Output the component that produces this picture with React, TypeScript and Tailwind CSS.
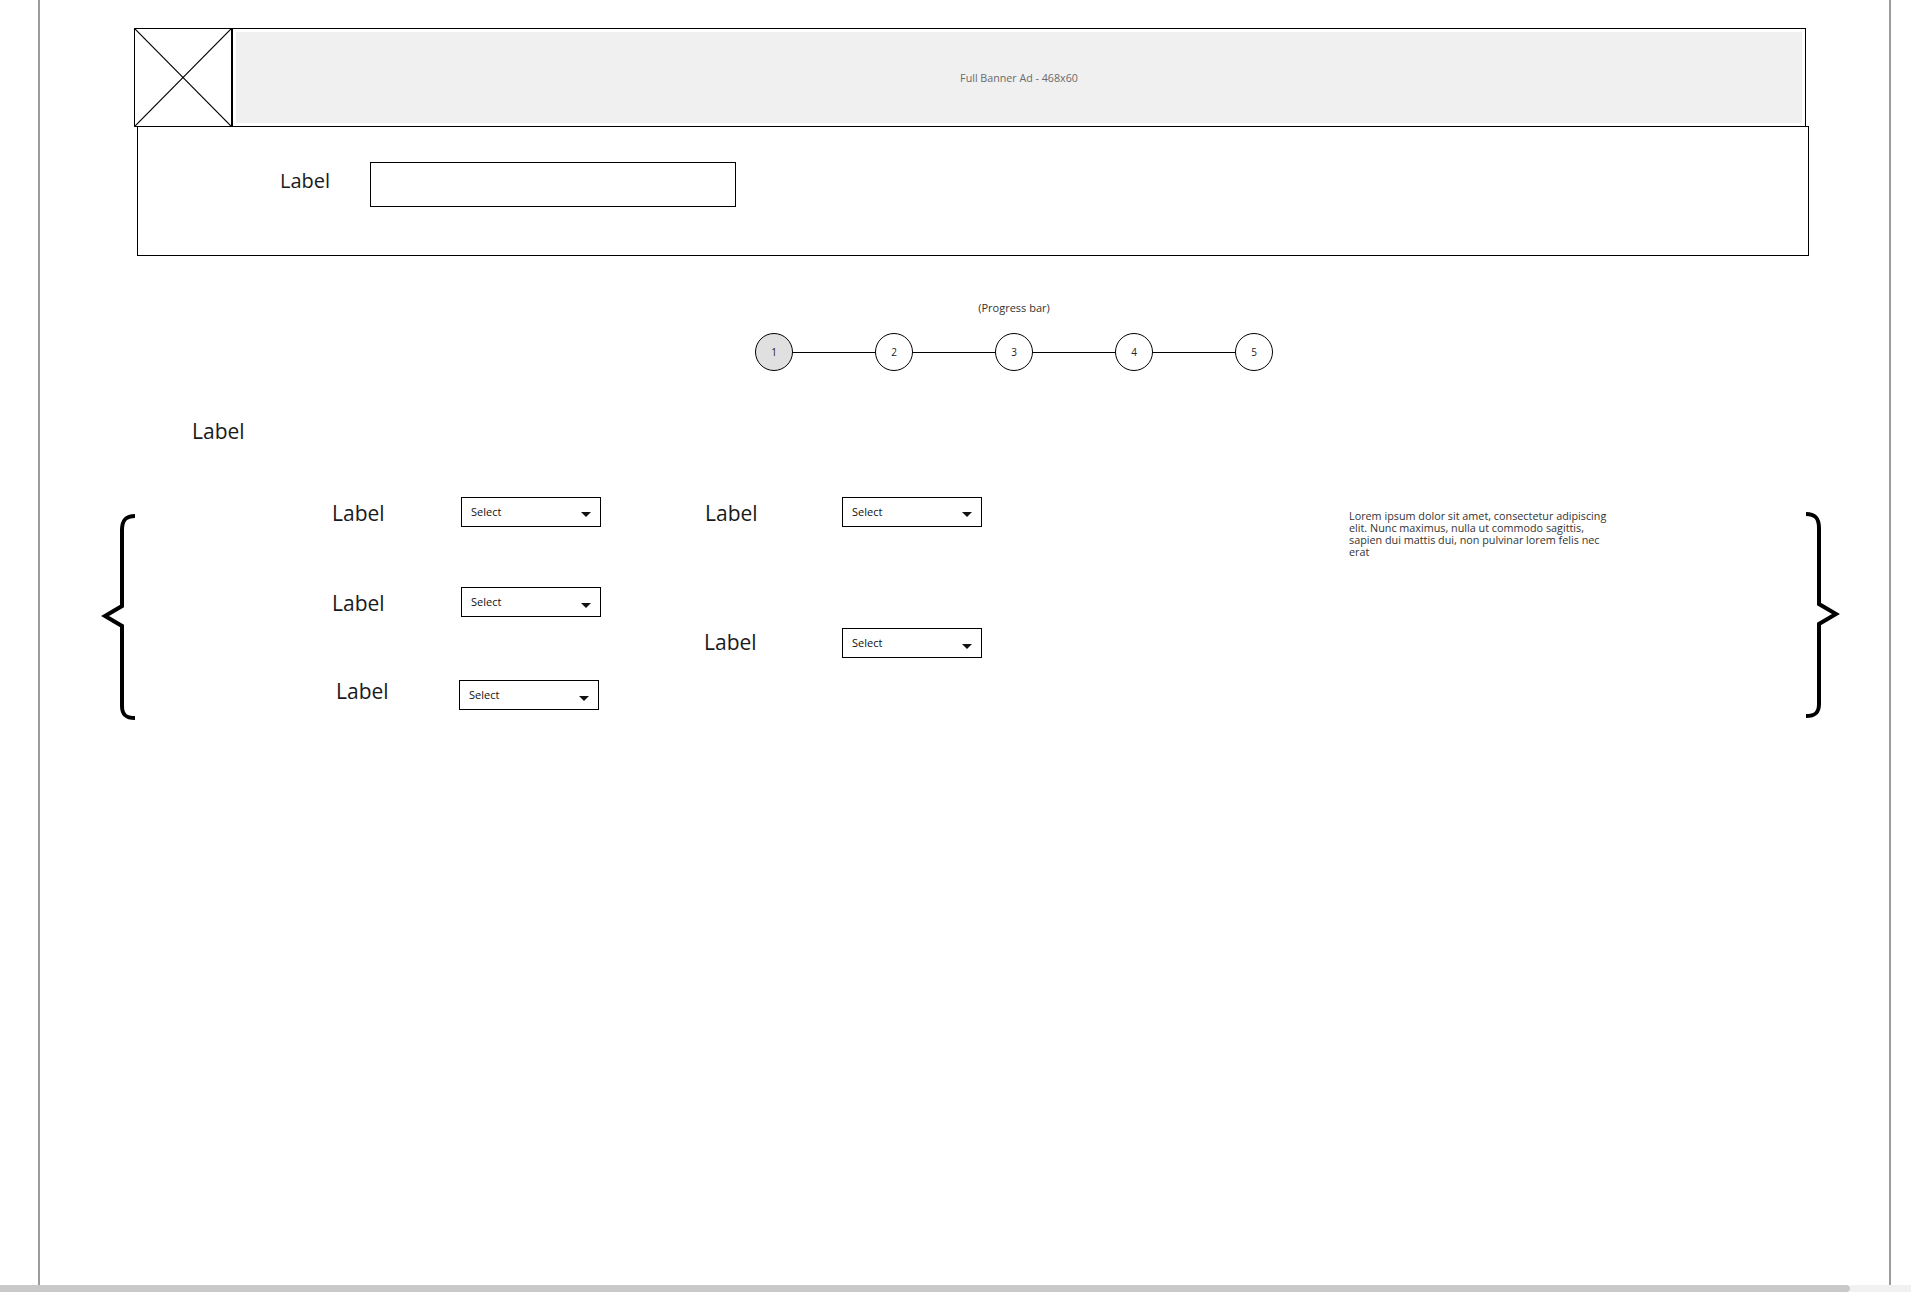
import React from "react";

const font = { fontFamily: '"Open Sans", "Noto Sans", sans-serif' };

function Select() {
  return (
    <div className="flex h-[30px] w-[140px] items-center justify-between border border-black bg-white pl-[9px] pr-[9px]">
      <span className="text-[11px] leading-[14px] text-[#111]">Select</span>
      <svg width="10" height="5" viewBox="0 0 10 5" className="mt-[6px]">
        <polygon points="0,0 10,0 5,5" fill="#111" />
      </svg>
    </div>
  );
}

function Label({ className = "" }: { className?: string }) {
  return <span className={"text-[21px] leading-[28px] text-[#1a1a1a] " + className}>Label</span>;
}

function Brace({ flip = false }: { flip?: boolean }) {
  return (
    <svg width="38" height="210" viewBox="0 0 38 210" className={flip ? "-scale-x-100" : ""}>
      <path
        d="M34 3 C 25 3, 21 7, 21 17 L 21 93 L 4 103 L 21 113 L 21 193 C 21 202, 25 205, 34 205"
        fill="none"
        stroke="#000"
        strokeWidth="4"
        strokeLinejoin="miter"
      />
    </svg>
  );
}

function Circle({ n, active = false }: { n: number; active?: boolean }) {
  return (
    <div
      className={
        "flex h-[38px] w-[38px] shrink-0 items-center justify-center rounded-full border border-black text-[10px] text-[#222] " +
        (active ? "bg-[#e0e0e0]" : "bg-white")
      }
    >
      {n}
    </div>
  );
}

export default function App() {
  return (
    <div className="h-[1292px] w-[1911px] overflow-hidden bg-white" style={font}>
      <div className="ml-[38px] flex h-[1285px] w-[1853px] flex-col border-x-2 border-[#9c9c9c] pt-[28px]">
        {/* Banner */}
        <div className="ml-[94px] flex h-[99px] w-[1672px] border border-black">
          <div className="h-full w-[98px] shrink-0 border-r-2 border-black">
            <svg width="100%" height="100%" viewBox="0 0 96 97" preserveAspectRatio="none">
              <line x1="0" y1="0" x2="96" y2="97" stroke="#000" strokeWidth="1.2" />
              <line x1="96" y1="0" x2="0" y2="97" stroke="#000" strokeWidth="1.2" />
            </svg>
          </div>
          <div className="flex flex-1 p-[3px]">
            <div className="flex flex-1 items-center justify-center bg-[#f0f0f0] pt-[2px] text-[10.7px] text-[#6b6b6b]">
              Full Banner Ad - 468x60
            </div>
          </div>
        </div>

        {/* Panel */}
        <div className="ml-[97px] -mt-[1px] flex h-[130px] w-[1672px] items-start border border-black pl-[142px] pt-[35px]">
          <div className="flex items-center">
            <span className="-mt-[7px] w-[90px] text-[20px] leading-[28px] text-[#1a1a1a]">Label</span>
            <div className="h-[45px] w-[366px] border border-black bg-white" />
          </div>
        </div>

        {/* Progress bar */}
        <div className="ml-[715px] mt-[44px] flex w-[518px] flex-col items-center">
          <div className="h-[15px] text-[11px] leading-[15px] text-[#333]">(Progress bar)</div>
          <div className="mt-[18px] flex items-center">
            <Circle n={1} active />
            <div className="h-px w-[82px] bg-black" />
            <Circle n={2} />
            <div className="h-px w-[82px] bg-black" />
            <Circle n={3} />
            <div className="h-px w-[82px] bg-black" />
            <Circle n={4} />
            <div className="h-px w-[82px] bg-black" />
            <Circle n={5} />
          </div>
        </div>

        {/* Section label */}
        <div className="ml-[152px] mt-[46px] h-[28px]">
          <Label />
        </div>

        {/* Brace section */}
        <div className="mt-[51px] flex items-start">
          <div className="ml-[61px] mt-[17px]">
            <Brace />
          </div>

          <div className="ml-[193px] flex flex-col">
            <div className="flex items-center">
              <Label className="mt-[3px] w-[129px]" />
              <Select />
            </div>
            <div className="mt-[60px] flex items-center">
              <Label className="mt-[2px] w-[129px]" />
              <Select />
            </div>
            <div className="mt-[63px] flex items-center">
              <Label className="ml-[4px] w-[123px] -mt-[8px]" />
              <Select />
            </div>
          </div>

          <div className="ml-[104px] flex flex-col">
            <div className="flex items-center">
              <Label className="mt-[3px] w-[137px]" />
              <Select />
            </div>
            <div className="mt-[101px] flex items-center">
              <Label className="-ml-[1px] -mt-[2px] w-[138px]" />
              <Select />
            </div>
          </div>

          <div className="ml-[367px] mt-[14px] whitespace-nowrap text-[10.8px] leading-[12px] text-[#333]">
            Lorem ipsum dolor sit amet, consectetur adipiscing
            <br />
            elit. Nunc maximus, nulla ut commodo sagittis,
            <br />
            sapien dui mattis dui, non pulvinar lorem felis nec
            <br />
            erat
          </div>

          <div className="flex-1" />
          <div className="mr-[49px] mt-[15px]">
            <Brace flip />
          </div>
        </div>
      </div>
      <div className="flex h-[7px] w-full">
        <div className="h-full w-[1850px] rounded-r-full bg-[#c9c9c9]" />
        <div className="h-full flex-1 bg-[#f1f1f1]" />
      </div>
    </div>
  );
}
